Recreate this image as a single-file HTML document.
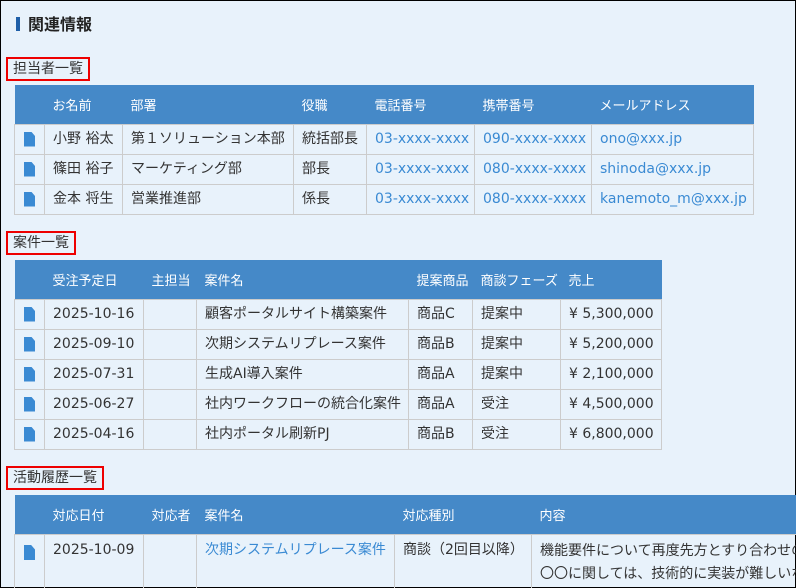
<!DOCTYPE html>
<html><head><meta charset="utf-8"><style>
*{box-sizing:border-box;margin:0;padding:0}
html,body{width:796px;height:588px;overflow:hidden}
body{background:#e8f2fb;border:1px solid #000;font-family:"DejaVu Sans","Noto Sans CJK JP",sans-serif;font-size:14px;color:#333;position:relative}
.title{position:absolute;left:15px;top:14px;font-size:16px;font-weight:bold;color:#222;line-height:20px}
.title:before{content:"";display:inline-block;width:4px;height:14px;background:#1f5fa8;margin-right:8px;vertical-align:-1px}
.lbl{position:absolute;left:5px;border:2px solid #e00;padding:0 5px;line-height:20px;font-size:14px;color:#333}
table{position:absolute;left:13px;border-collapse:collapse;table-layout:fixed}
th{background:#4589c8;color:#fff;font-weight:normal;text-align:left;height:39px;padding:0 8px;font-size:13px;border:none;white-space:nowrap;overflow:hidden}
td{border:1px solid #ccc;height:30px;padding:0 8px;white-space:nowrap;overflow:hidden;line-height:20px}
a{color:#3a8ad3;text-decoration:none}
.ic{padding:0;text-align:center}
.ic i{display:inline-block;width:11px;height:15px;background:#3a8ad3;clip-path:polygon(0 0,65% 0,100% 30%,100% 100%,0 100%);vertical-align:middle}
</style></head><body>
<div class="title">関連情報</div>
<div class="lbl" style="top:56px">担当者一覧</div>
<table style="top:84px;width:739px">
<colgroup><col style="width:30px"><col style="width:78px"><col style="width:171px"><col style="width:73px"><col style="width:108px"><col style="width:117px"><col style="width:162px"></colgroup>
<tr><th></th><th>お名前</th><th>部署</th><th>役職</th><th>電話番号</th><th>携帯番号</th><th>メールアドレス</th></tr>
<tr><td class="ic"><i></i></td><td>小野 裕太</td><td>第１ソリューション本部</td><td>統括部長</td><td><a>03-xxxx-xxxx</a></td><td><a>090-xxxx-xxxx</a></td><td><a>ono@xxx.jp</a></td></tr>
<tr><td class="ic"><i></i></td><td>篠田 裕子</td><td>マーケティング部</td><td>部長</td><td><a>03-xxxx-xxxx</a></td><td><a>080-xxxx-xxxx</a></td><td><a>shinoda@xxx.jp</a></td></tr>
<tr><td class="ic"><i></i></td><td>金本 将生</td><td>営業推進部</td><td>係長</td><td><a>03-xxxx-xxxx</a></td><td><a>080-xxxx-xxxx</a></td><td><a>kanemoto_m@xxx.jp</a></td></tr>
</table>
<div class="lbl" style="top:230px">案件一覧</div>
<table style="top:259px;width:647px">
<colgroup><col style="width:30px"><col style="width:99px"><col style="width:53px"><col style="width:212px"><col style="width:64px"><col style="width:88px"><col style="width:101px"></colgroup>
<tr><th></th><th>受注予定日</th><th>主担当</th><th>案件名</th><th>提案商品</th><th>商談フェーズ</th><th>売上</th></tr>
<tr><td class="ic"><i></i></td><td>2025-10-16</td><td></td><td>顧客ポータルサイト構築案件</td><td>商品C</td><td>提案中</td><td>¥ 5,300,000</td></tr>
<tr><td class="ic"><i></i></td><td>2025-09-10</td><td></td><td>次期システムリプレース案件</td><td>商品B</td><td>提案中</td><td>¥ 5,200,000</td></tr>
<tr><td class="ic"><i></i></td><td>2025-07-31</td><td></td><td>生成AI導入案件</td><td>商品A</td><td>提案中</td><td>¥ 2,100,000</td></tr>
<tr><td class="ic"><i></i></td><td>2025-06-27</td><td></td><td>社内ワークフローの統合化案件</td><td>商品A</td><td>受注</td><td>¥ 4,500,000</td></tr>
<tr><td class="ic"><i></i></td><td>2025-04-16</td><td></td><td>社内ポータル刷新PJ</td><td>商品B</td><td>受注</td><td>¥ 6,800,000</td></tr>
</table>
<div class="lbl" style="top:465px">活動履歴一覧</div>
<table style="top:494px;width:900px">
<colgroup><col style="width:30px"><col style="width:99px"><col style="width:53px"><col style="width:198px"><col style="width:137px"><col style="width:383px"></colgroup>
<tr><th></th><th>対応日付</th><th>対応者</th><th>案件名</th><th>対応種別</th><th>内容</th></tr>
<tr><td class="ic" style="vertical-align:top;padding-top:8px;height:54px"><i></i></td><td style="vertical-align:top;padding-top:5px">2025-10-09</td><td></td><td style="vertical-align:top;padding-top:5px"><a>次期システムリプレース案件</a></td><td style="vertical-align:top;padding-top:5px">商談（2回目以降）</td><td style="vertical-align:top;padding-top:5px;line-height:23px">機能要件について再度先方とすり合わせの<br>〇〇に関しては、技術的に実装が難しいな</td></tr>
</table>
</body></html>
